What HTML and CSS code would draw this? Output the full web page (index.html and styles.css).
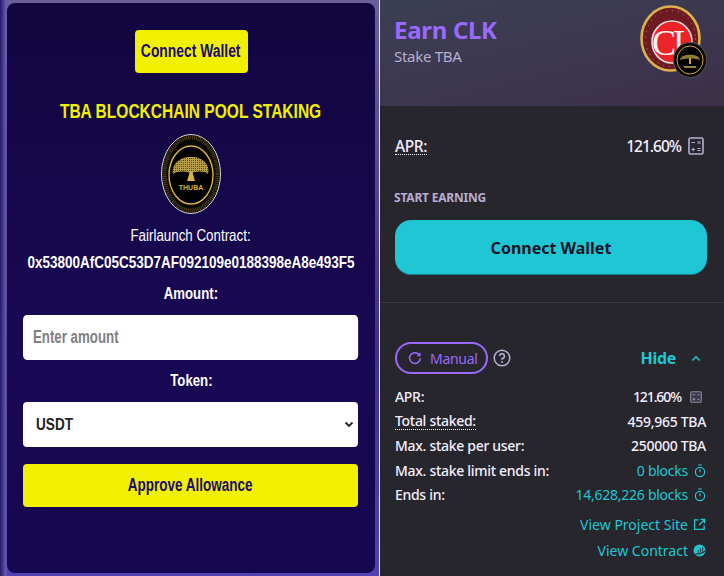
FILE: index.html
```html
<!DOCTYPE html>
<html>
<head>
    <meta charset="utf-8">
    <title>TBA Pool Staking</title>
    <link rel="stylesheet" href="styles.css">
</head>
<body>
    <div class="page">
        <section class="staking">
            <div class="staking-card">
                <button class="yellow-btn connect-top"><span class="btn-text">Connect Wallet</span></button>
                <h1 class="staking-title">TBA BLOCKCHAIN POOL STAKING</h1>
                <svg class="thuba-logo" viewBox="0 0 60 80">
                    <defs>
                        <pattern id="speck" width="2" height="2" patternUnits="userSpaceOnUse">
                            <rect width="2" height="2" fill="#b59c48"/>
                            <rect width="1" height="1" fill="#5e4f20"/>
                        </pattern>
                    </defs>
                    <ellipse cx="30" cy="40" rx="29.5" ry="39.5" fill="#0a0805" stroke="#d8d8e4" stroke-width="1"/>
                    <ellipse cx="30" cy="40" rx="26.5" ry="36.5" fill="none" stroke="#54461c" stroke-width="4" stroke-dasharray="1 1"/>
                    <ellipse cx="30" cy="41" rx="22" ry="29" fill="#000" stroke="#d9b33c" stroke-width="1.4"/>
                    <path d="M12 40C10 29 21 22 30 23C39 22 50 29 47 40C44 37 38 37 33 38L31 40H29L27 38C22 37 16 37 12 40Z" fill="url(#speck)"/>
                    <path d="M26 47L28.8 38H31.2L34 47Z" fill="#d9b33c"/>
                    <text x="30" y="56" class="thuba-text">THUBA</text>
                </svg>
                <p class="contract-label">Fairlaunch Contract:</p>
                <p class="contract-addr">0x53800AfC05C53D7AF092109e0188398eA8e493F5</p>
                <label class="field-label">Amount:</label>
                <input class="field-input" type="text" placeholder="Enter amount">
                <label class="field-label token-label">Token:</label>
                <div class="field-select">
                    <span class="select-text">USDT</span>
                    <svg class="select-arrow" viewBox="0 0 10 7"><path d="M1.5 1.5 L5 5 L8.5 1.5" fill="none" stroke="#222" stroke-width="1.8"/></svg>
                </div>
                <button class="yellow-btn approve"><span class="btn-text">Approve Allowance</span></button>
            </div>
        </section>

        <section class="pool">
            <div class="pool-head">
                <div>
                    <h2 class="pool-title">Earn CLK</h2>
                    <p class="pool-sub">Stake TBA</p>
                </div>
                <div class="pool-logo">
                    <svg class="clk-logo" viewBox="0 0 61 67">
                        <ellipse cx="30.5" cy="33.5" rx="29" ry="32" fill="#6d1a20" stroke="#dcb24c" stroke-width="2.6"/>
                        <ellipse cx="30.5" cy="33.5" rx="25" ry="28" fill="none" stroke="#c98a6a" stroke-width="1" stroke-dasharray="1 5"/>
                        <ellipse cx="32" cy="37" rx="20" ry="21" fill="#ee2328" stroke="#e4dcdc" stroke-width="1.6"/>
                        <text x="32" y="50" class="clk-text">CL</text>
                    </svg>
                    <svg class="mini-logo" viewBox="0 0 34 36">
                        <ellipse cx="17" cy="18" rx="16.5" ry="17.5" fill="#0a0805" stroke="#55535a"/>
                        <ellipse cx="17" cy="18" rx="13" ry="14" fill="#000" stroke="#cfa832"/>
                        <path d="M7 18C7 11 27 11 27 18C23 16 11 16 7 18Z" fill="#8d7a34"/>
                        <rect x="16" y="16" width="2" height="6" fill="#cfa832"/>
                        <rect x="11" y="24" width="12" height="2" fill="#9a8430"/>
                    </svg>
                </div>
            </div>

            <div class="pool-main">
                <div class="apr-row">
                    <span class="dotted">APR:</span>
                    <span class="apr-val">121.60%
                        <svg class="calc-icon" viewBox="0 0 16 18">
                            <rect x="1" y="1" width="14" height="16" rx="1.5" fill="none" stroke="#b8add2" stroke-width="1.6"/>
                            <path d="M3.5 5.5h3.5M9.5 4l3 3M12.5 4l-3 3M3.5 12.5h3.5M5.2 10.7v3.6M9.5 11.5h3M9.5 13.5h3" stroke="#b8add2" stroke-width="1"/>
                        </svg>
                    </span>
                </div>
                <div class="start-label">START EARNING</div>
                <button class="teal-btn">Connect Wallet</button>
            </div>

            <div class="pool-details">
                <div class="manual-row">
                    <div class="manual-left">
                        <span class="manual-tag">
                            <svg class="refresh-icon" viewBox="0 0 14 14"><path d="M11.6 4.2 A5.4 5.4 0 1 0 12.4 7.4" fill="none" stroke="#9a6aff" stroke-width="1.5"/><path d="M12.6 1.2 V5.2 H8.6 Z" fill="#9a6aff"/></svg>
                            Manual
                        </span>
                        <svg class="help-icon" viewBox="0 0 18 18">
                            <circle cx="9" cy="9" r="7.8" fill="none" stroke="#b8add2" stroke-width="1.5"/>
                            <path d="M6.6 7 A2.4 2.4 0 1 1 9 9.5 V10.8" fill="none" stroke="#b8add2" stroke-width="1.5"/>
                            <circle cx="9" cy="13" r="1" fill="#b8add2"/>
                        </svg>
                    </div>
                    <span class="hide-link">Hide
                        <svg class="chevron-up" viewBox="0 0 12 8"><path d="M1.5 6.5 L6 2 L10.5 6.5" fill="none" stroke="#1fc7d4" stroke-width="1.8"/></svg>
                    </span>
                </div>

                <div class="stat-row">
                    <span>APR:</span>
                    <span class="stat-val apr-small">121.60%
                        <svg class="calc-small" viewBox="0 0 16 16">
                            <rect x="1" y="1" width="14" height="14" rx="1.5" fill="#3a3645" stroke="#8f88a3" stroke-width="1.5"/>
                            <path d="M3.5 5h3.5M9.5 5h3M3.5 11h3.5M5.2 9.2v3.6M9.5 11h3" stroke="#b8add2" stroke-width="1"/>
                        </svg>
                    </span>
                </div>
                <div class="stat-row"><span class="dotted">Total staked:</span><span class="stat-val">459,965 TBA</span></div>
                <div class="stat-row"><span>Max. stake per user:</span><span class="stat-val">250000 TBA</span></div>
                <div class="stat-row"><span>Max. stake limit ends in:</span>
                    <span class="stat-val teal">0 blocks
                        <svg class="timer-icon" viewBox="0 0 14 16"><circle cx="7" cy="9.2" r="5.4" fill="none" stroke="#1fc7d4" stroke-width="1.4"/><path d="M4.8 1h4.4M7 6v3.4" stroke="#1fc7d4" stroke-width="1.4"/></svg>
                    </span>
                </div>
                <div class="stat-row"><span>Ends in:</span>
                    <span class="stat-val teal">14,628,226 blocks
                        <svg class="timer-icon" viewBox="0 0 14 16"><circle cx="7" cy="9.2" r="5.4" fill="none" stroke="#1fc7d4" stroke-width="1.4"/><path d="M4.8 1h4.4M7 6v3.4" stroke="#1fc7d4" stroke-width="1.4"/></svg>
                    </span>
                </div>
                <div class="link-row project-link">View Project Site
                    <svg class="link-icon" viewBox="0 0 14 14"><path d="M6 2H1.7V12.3H12V8M8 1.5H12.5V6M12.2 1.8L6.5 7.5" fill="none" stroke="#1fc7d4" stroke-width="1.4"/></svg>
                </div>
                <div class="link-row contract-link">View Contract
                    <svg class="link-icon" viewBox="0 0 14 14">
                        <circle cx="7" cy="7" r="6.4" fill="#1fc7d4"/>
                        <path d="M2.2 10.8C6 11 10.4 10 13 7.4" fill="none" stroke="#27262c" stroke-width="1.2"/>
                        <path d="M5.6 9.6V6.4M8 9.2V4.8M10.4 8.2V3.4" stroke="#27262c" stroke-width="1"/>
                    </svg>
                </div>
            </div>
        </section>
    </div>
</body>
</html>
```

FILE: styles.css
```css
* {
    box-sizing: border-box;
}

body {
    margin: 0;
    background: #27262c;
}

button {
    cursor: pointer;
    border: none;
}

.page {
    display: flex;
    width: 724px;
    height: 576px;
    overflow: hidden;
}

/* left side, the reference squeezes this text sideways so it gets a scaleX */
.staking {
    width: 380px;
    height: 576px;
    padding: 3px 4px 3px 7px;
    background:
        linear-gradient(90deg, #241a68 0, #6a5ab0 6px, transparent 7px),
        linear-gradient(180deg, #6a5f9a 0%, #3d2f8a 60%, #5140b4 100%);
    border-right: 1px solid #e6e6ee;
    font-family: "Liberation Sans", Arial, sans-serif;
}

.staking-card {
    height: 100%;
    padding: 27px 16px 0 16px;
    border-radius: 8px;
    background: linear-gradient(180deg, #12063f 0%, #190854 60%, #170750 100%);
    display: flex;
    flex-direction: column;
    align-items: center;
    color: #fff;
}

.yellow-btn {
    background: #f0f000;
    color: #1c0a78;
    font-family: "Liberation Sans", Arial, sans-serif;
    font-weight: bold;
    font-size: 18px;
    border-radius: 4px;
}

.btn-text {
    display: inline-block;
    white-space: nowrap;
    transform: scaleX(0.75);
}

.connect-top {
    width: 113px;
    height: 43px;
    padding: 0;
    flex-shrink: 0;
}

.connect-top .btn-text {
    margin: 0 -20px;
    transform: scaleX(0.77);
}

.staking-title {
    margin: 24px 0 0 0;
    color: #f0f000;
    font-size: 21px;
    line-height: 28px;
    white-space: nowrap;
    transform: scaleX(0.74);
}

.thuba-logo {
    width: 60px;
    height: 80px;
    margin-top: 9px;
    flex-shrink: 0;
}

.thuba-text {
    font-family: "Liberation Sans", Arial, sans-serif;
    font-weight: bold;
    font-size: 7px;
    fill: #d9b33c;
    text-anchor: middle;
}

.contract-label {
    margin: 10px 0 0 0;
    font-size: 17px;
    line-height: 24px;
    white-space: nowrap;
    transform: scaleX(0.785);
}

.contract-addr {
    margin: 2px 0 0 0;
    font-size: 16.5px;
    line-height: 24px;
    font-weight: bold;
    white-space: nowrap;
    transform: scaleX(0.817);
}

.field-label {
    margin-top: 7px;
    font-size: 16.5px;
    line-height: 24px;
    font-weight: bold;
    transform: scaleX(0.8);
}

.token-label {
    margin-top: 8px;
}

/* width is 335px once scaled */
.field-input {
    align-self: flex-start;
    flex-shrink: 0;
    width: 441px;
    height: 45px;
    margin-top: 10px;
    padding: 0 13px;
    border: none;
    border-radius: 5px;
    background: #fff;
    font-family: "Liberation Sans", Arial, sans-serif;
    font-size: 17.5px;
    font-weight: bold;
    transform-origin: left center;
    transform: scaleX(0.76);
}

.field-input::placeholder {
    color: #808080;
}

.field-select {
    align-self: flex-start;
    width: 335px;
    height: 45px;
    margin-top: 10px;
    padding: 0 4px 0 13px;
    border-radius: 4px;
    background: #fff;
    color: #222;
    display: flex;
    align-items: center;
    justify-content: space-between;
    font-size: 17px;
    font-weight: bold;
}

.select-text {
    transform-origin: left center;
    transform: scaleX(0.8);
}

.select-arrow {
    width: 10px;
    height: 7px;
}

.approve {
    align-self: flex-start;
    width: 335px;
    height: 43px;
    margin-top: 17px;
    padding-bottom: 2px;
}

/* right side */
.pool {
    flex: 1;
    height: 576px;
    font-family: "Noto Sans", "Open Sans", sans-serif;
    color: #f4eeff;
}

.pool-head {
    height: 106px;
    padding: 15px 17px 0 14px;
    display: flex;
    justify-content: space-between;
    background: linear-gradient(166deg, #3b3f52 0%, #3d3650 60%, #3c2f47 100%);
}

.pool-title {
    margin: 0;
    font-size: 24px;
    line-height: 30px;
    font-weight: 700;
    color: #9a6aff;
    letter-spacing: -0.3px;
}

.pool-sub {
    margin: 1px 0 0 0;
    font-size: 15px;
    line-height: 20px;
    color: #b8add2;
    letter-spacing: -0.3px;
}

.pool-logo {
    position: relative;
    width: 67px;
    height: 67px;
    margin-top: -10px;
}

.clk-logo {
    width: 61px;
    height: 67px;
}

.clk-text {
    font-family: "Liberation Serif", serif;
    font-size: 36px;
    letter-spacing: -3px;
    fill: #f3f0f0;
    text-anchor: middle;
}

.mini-logo {
    position: absolute;
    right: 0;
    bottom: -6px;
    width: 34px;
    height: 36px;
}

.pool-main {
    height: 197px;
    padding: 28px 17px 0 15px;
    border-bottom: 1px solid #3a3445;
}

.apr-row,
.stat-row,
.manual-row {
    display: flex;
    justify-content: space-between;
    align-items: center;
}

.apr-row {
    height: 24px;
    font-size: 15.5px;
    font-weight: 500;
    letter-spacing: -0.4px;
}

.apr-val {
    display: flex;
    align-items: center;
    gap: 7px;
    margin-right: 3px;
    letter-spacing: -1px;
}

.calc-icon {
    width: 16px;
    height: 18px;
}

.dotted {
    border-bottom: 1px dotted #f4eeff;
    line-height: 16px;
}

.start-label {
    margin-top: 32px;
    margin-left: -1px;
    font-size: 12px;
    line-height: 16px;
    font-weight: 700;
    color: #b8add2;
    letter-spacing: -0.2px;
}

.teal-btn {
    display: block;
    width: 312px;
    height: 55px;
    margin-top: 14px;
    border-radius: 16px;
    background: #1fc7d4;
    box-shadow: inset 0 -1px 0 rgba(14, 14, 44, 0.4);
    color: #191326;
    font-family: "Noto Sans", "Open Sans", sans-serif;
    font-size: 16px;
    font-weight: 700;
}

.pool-details {
    padding: 39px 18px 0 15px;
    font-size: 14px;
    font-weight: 500;
    letter-spacing: -0.3px;
}

.manual-row {
    height: 32px;
    margin-bottom: 11px;
}

.manual-left {
    display: flex;
    align-items: center;
    gap: 5px;
}

.manual-tag {
    display: flex;
    align-items: center;
    gap: 8px;
    width: 93px;
    height: 32px;
    padding-left: 11px;
    border: 2px solid #9a6aff;
    border-radius: 16px;
    color: #9a6aff;
    font-size: 14px;
    font-weight: 400;
}

.refresh-icon {
    width: 14px;
    height: 14px;
}

.help-icon {
    width: 18px;
    height: 18px;
}

.hide-link {
    display: flex;
    align-items: center;
    gap: 15px;
    color: #1fc7d4;
    font-size: 16px;
    font-weight: 700;
    margin-right: 5px;
}

.chevron-up {
    width: 10px;
    height: 7px;
}

.stat-row {
    height: 24.5px;
    line-height: 20px;
}

.stat-val {
    display: flex;
    align-items: center;
    gap: 6px;
}

.apr-small {
    margin-right: 4px;
    gap: 9px;
    letter-spacing: -1.1px;
}

.calc-small {
    width: 12px;
    height: 12px;
}

.teal {
    color: #1fc7d4;
    font-weight: 400;
    letter-spacing: -0.25px;
}

.timer-icon {
    width: 12px;
    height: 14px;
}

.link-row {
    display: flex;
    justify-content: flex-end;
    align-items: center;
    gap: 5px;
    color: #1fc7d4;
    height: 26px;
    font-weight: 400;
    letter-spacing: 0;
}

.project-link {
    margin-top: 4px;
}

.link-icon {
    width: 13px;
    height: 13px;
}
```
